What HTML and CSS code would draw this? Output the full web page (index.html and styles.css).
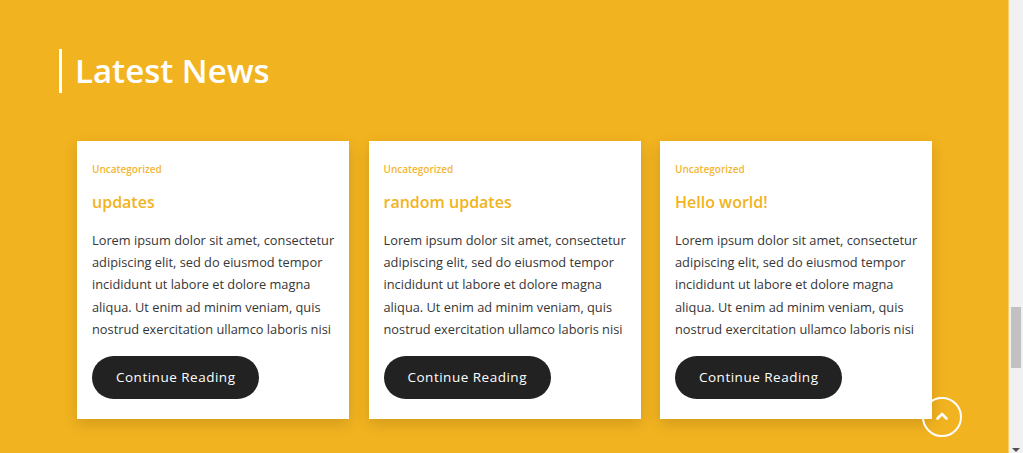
FILE: index.html
```html
<!DOCTYPE html>
<html lang="en">
<head>
<meta charset="UTF-8">
<meta name="viewport" content="width=device-width, initial-scale=1.0">
<title>Latest News</title>
<link rel="stylesheet" href="styles.css">
</head>
<body>

<div class="page">
    <main class="news">
        <div class="container">
            <h2 class="section-title">Latest News</h2>

            <!-- Post cards -->
            <div class="cards">
                <article class="card">
                    <a href="#" class="card-cat">Uncategorized</a>
                    <h3 class="card-title">updates</h3>
                    <p class="card-text">Lorem ipsum dolor sit amet, consectetur adipiscing elit, sed do eiusmod tempor incididunt ut labore et dolore magna aliqua. Ut enim ad minim veniam, quis nostrud exercitation ullamco laboris nisi</p>
                    <a href="#" class="btn">Continue Reading</a>
                </article>
                <article class="card">
                    <a href="#" class="card-cat">Uncategorized</a>
                    <h3 class="card-title">random updates</h3>
                    <p class="card-text">Lorem ipsum dolor sit amet, consectetur adipiscing elit, sed do eiusmod tempor incididunt ut labore et dolore magna aliqua. Ut enim ad minim veniam, quis nostrud exercitation ullamco laboris nisi</p>
                    <a href="#" class="btn">Continue Reading</a>
                </article>
                <article class="card">
                    <a href="#" class="card-cat">Uncategorized</a>
                    <h3 class="card-title">Hello world!</h3>
                    <p class="card-text">Lorem ipsum dolor sit amet, consectetur adipiscing elit, sed do eiusmod tempor incididunt ut labore et dolore magna aliqua. Ut enim ad minim veniam, quis nostrud exercitation ullamco laboris nisi</p>
                    <a href="#" class="btn">Continue Reading</a>
                </article>
            </div>
        </div>

        <!-- Back to top -->
        <a href="#" class="to-top" aria-label="Back to top">
            <svg width="12" height="8" viewBox="0 0 12 8"><path d="M1.5 6.5 L6 2 L10.5 6.5" fill="none" stroke="#fff" stroke-width="2.6" stroke-linecap="round" stroke-linejoin="round"/></svg>
        </a>
    </main>

    <!-- Scrollbar -->
    <div class="scrollbar">
        <div class="thumb"></div>
        <div class="arrow"></div>
    </div>
</div>

</body>
</html>
```

FILE: styles.css
```css
html, body {
    margin: 0;
    height: 100%;
    overflow: hidden;
}
body {
    font-family: "Open Sans", Arial, sans-serif;
    background-color: #f2b320;
}
.page {
    display: flex;
    height: 453px;
}
.news {
    width: 1008px;
    background-color: #f2b320;
    border-right: 1px solid #f7cf6e;
}
.container {
    width: 890px;
    margin: 0 auto;
    padding-top: 49px;
}
.section-title {
    margin: 0;
    color: #fff;
    font-size: 33px;
    font-weight: 600;
    line-height: 44px;
    border-left: 3px solid #fff;
    padding-left: 13px;
}
.cards {
    display: flex;
    justify-content: center;
    gap: 19.5px;
    margin-top: 48px;
    margin-left: 1px;
}
.card {
    width: 272px;
    box-sizing: border-box;
    background: #fff;
    padding: 21px 8px 20px 15px;
    box-shadow: 0 5px 14px rgba(0,0,0,0.14);
}
.card-cat {
    display: block;
    color: #f4b634;
    font-size: 10px;
    font-weight: 600;
    line-height: 15px;
    text-decoration: none;
}
.card-title {
    margin: 13px 0 0;
    color: #f2b320;
    font-size: 16px;
    font-weight: 600;
    line-height: 24px;
}
.card-text {
    margin: 15px 0 0;
    color: #363636;
    font-size: 12.8px;
    line-height: 22.2px;
}
.btn {
    display: inline-block;
    margin-top: 16px;
    height: 43px;
    line-height: 43px;
    padding: 0 24px;
    border-radius: 22px;
    background-color: #222;
    color: #fff;
    font-size: 13.5px;
    letter-spacing: 0.5px;
    text-decoration: none;
}
.to-top {
    position: fixed;
    left: 922px;
    top: 397px;
    width: 36px;
    height: 36px;
    border: 2px solid #fff;
    border-radius: 50%;
    display: flex;
    align-items: center;
    justify-content: center;
}
.to-top svg {
    margin-top: -2px;
}
.scrollbar {
    flex: 1;
    background: #f1f1f1;
    display: flex;
    flex-direction: column;
    align-items: center;
}
.thumb {
    width: 10px;
    height: 61px;
    margin-top: 307px;
    background: #c1c1c1;
}
.arrow {
    margin-top: auto;
    margin-bottom: 1px;
    width: 0;
    height: 0;
    border-left: 4px solid transparent;
    border-right: 4px solid transparent;
    border-top: 4px solid #505050;
}
```
